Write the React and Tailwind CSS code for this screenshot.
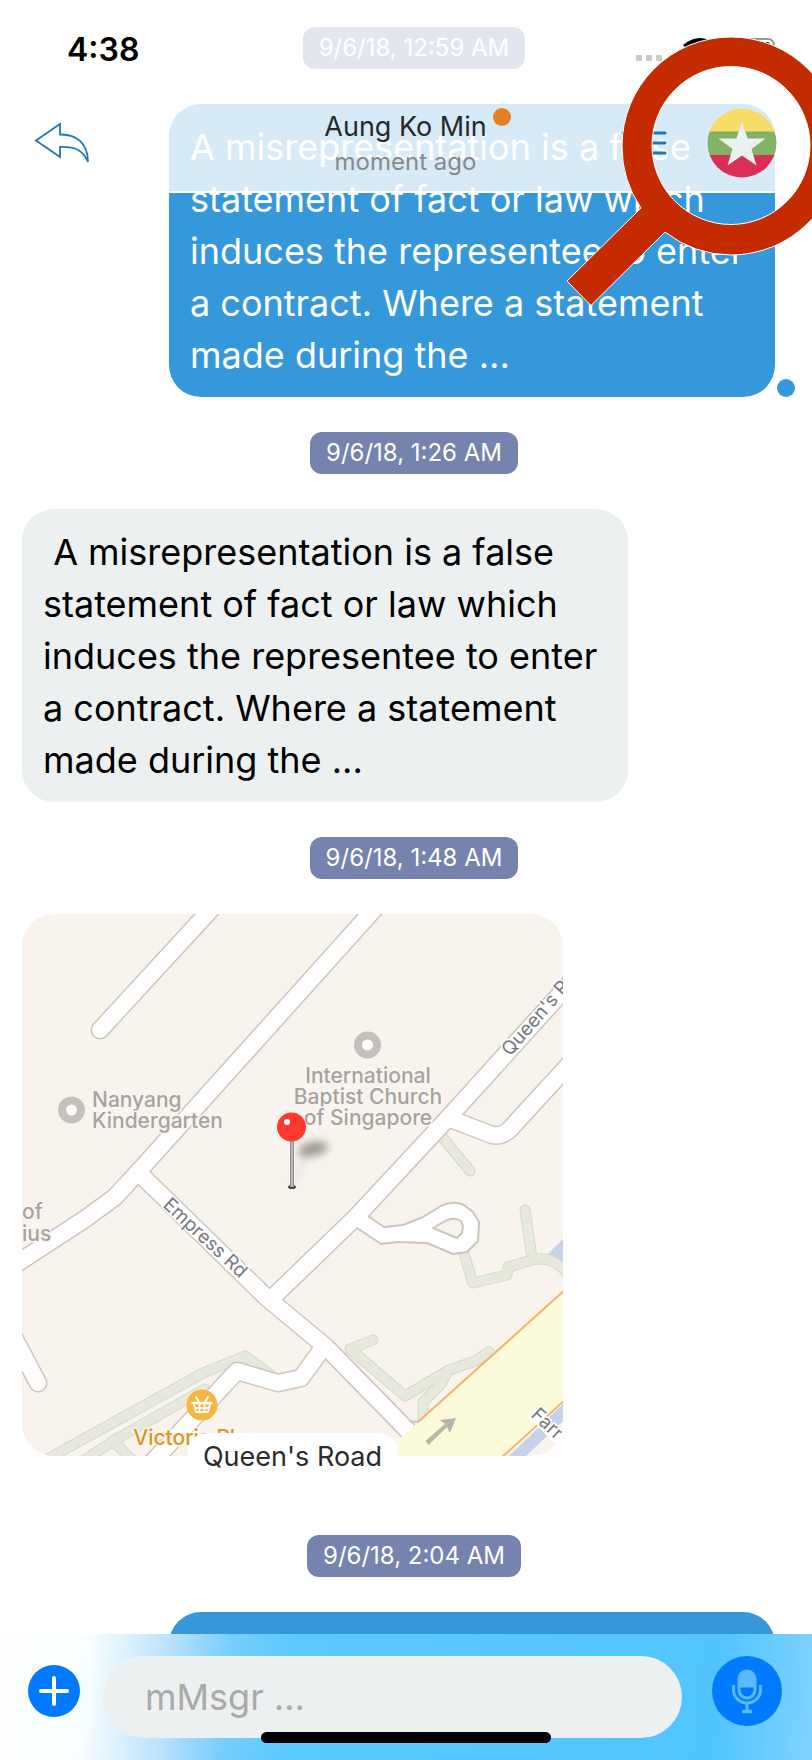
import React from "react";

const EXCERPT = [
  "A misrepresentation is a false",
  "statement of fact or law which",
  "induces the representee to enter",
  "a contract. Where a statement",
  "made during the ...",
];

function TimeStamp({ children }) {
  return (
    <div className="flex justify-center pl-4">
      <time className="flex h-[42px] items-center rounded-xl bg-[#7484ae] px-4 text-[24px] leading-[28px] text-white">
        {children}
      </time>
    </div>
  );
}

function Bubble({ lines, sent = false, indent = false, unread = false }) {
  return (
    <div className={sent ? "flex items-end justify-end gap-[2px] pr-[17px]" : "flex pl-[22px]"}>
      <p
        className={
          sent
            ? "min-h-[80px] w-[606px] rounded-[32px] bg-[#3598db] px-[21px] pb-4 pt-[17px] text-[36px] leading-[52px] text-white"
            : "w-[606px] rounded-[32px] bg-[#ecf0f1] px-[21px] pb-4 pt-[17px] text-[36px] leading-[52px] text-black"
        }
      >
        {lines.map((line, i) => (
          <span key={line} className="block whitespace-pre">
            {indent && i === 0 ? " " + line : line}
          </span>
        ))}
      </p>
      <span className={unread ? "size-[18px] rounded-full bg-[#3598db]" : sent ? "size-[18px]" : "hidden"} />
    </div>
  );
}

const GREEN = [
  "M40 1463L203 1373L245 1356L272 1376",
  "M80 1463L113 1441L205 1389",
  "M113 1441L134 1462",
  "M443 1138L470 1171",
  "M525 1210L532 1258",
  "M463 1250L473 1283L507 1275L508 1267L532 1260Q552 1255 566 1272",
  "M373 1340L350 1349L405 1396L447 1371L475 1361L489 1352L497 1360",
  "M447 1371Q443 1384 437 1388L423 1402L423 1424",
];

const ROADS = [
  "M100 1030L215 905",
  "M378 905L138 1172L115 1197L85 1219L10 1268",
  "M138 1172L267 1298L326 1347L420 1443",
  "M572 981L448 1118L356 1217L270 1300",
  "M448 1118L492 1135Q502 1137 510 1129L575 1058",
  "M322 1349L301 1378L278 1383L237 1371L145 1470",
  "M10 1330L38 1383",
];

const LOOP =
  "M360 1208L368 1216L384 1227L403 1225L423 1217L441 1206Q453 1200 464 1205L473 1212L479 1222L478 1241L467 1252L453 1254L427 1243L397 1242L381 1244L357 1228L350 1222ZM433 1228L447 1220Q456 1217 461 1221L463 1226L462 1233L457 1238Z";

function MapDrawing() {
  return (
    <svg
      viewBox="22 914 541 542"
      className="block h-[542px] w-[541px] rounded-[32px] bg-[#f8f4ed]"
      role="img"
      aria-label="Map"
      fontFamily="Inter, sans-serif"
    >
      <defs>
        <filter id="soft" x="-50%" y="-50%" width="200%" height="200%">
          <feGaussianBlur stdDeviation="4" />
        </filter>
      </defs>
      <path d="M548 1254L563 1239V1275Z" fill="#c6d1ea" />
      <g fill="none" strokeLinejoin="round" strokeLinecap="round">
        {GREEN.map((d) => (
          <path key={d} d={d} stroke="#d5d8c9" strokeWidth="11" />
        ))}
        {GREEN.map((d) => (
          <path key={d} d={d} stroke="#e7e9dd" strokeWidth="9" />
        ))}
        {ROADS.map((d) => (
          <path key={d} d={d} stroke="#cdc5be" strokeWidth="19" />
        ))}
        <path d={LOOP} fill="#fff" fillRule="evenodd" stroke="#cdc5be" strokeWidth="2" />
        {ROADS.map((d) => (
          <path key={d} d={d} stroke="#fff" strokeWidth="16" />
        ))}
      </g>
      <path d="M563 1292L418 1422L397 1441L385 1457H502L563 1402Z" fill="#fbfadb" />
      <path d="M508 1457L563 1404V1421L525 1457Z" fill="#c6d1ea" />
      <path d="M566 1289L418 1422M500 1459L566 1399" fill="none" stroke="#f5b169" strokeWidth="2" />
      <path d="M418 1422L409 1421" stroke="#cdc5be" strokeWidth="2" />
      <path d="M533 1412L562 1442" stroke="#fff" strokeWidth="13" />
      <path d="M425.500 1441L445 1424L440 1420L456 1418L450 1433L447 1427L428.500 1445Z" fill="#b6b6aa" />

      <g fill="#fff" stroke="#c4c1bb" strokeWidth="8">
        <circle cx="71.500" cy="1110" r="9.500" />
        <circle cx="367.500" cy="1045" r="9.500" />
      </g>
      <g
        fill="#a6a3a1"
        stroke="#f9f6f0"
        strokeWidth="3"
        strokeLinejoin="round"
        paintOrder="stroke"
        fontSize="21"
        fontWeight="500"
      >
        <text x="92" y="1107">Nanyang</text>
        <text x="92" y="1128">Kindergarten</text>
        <text x="368" y="1083" textAnchor="middle">International</text>
        <text x="368" y="1104" textAnchor="middle">Baptist Church</text>
        <text x="368" y="1125" textAnchor="middle">of Singapore</text>
        <text x="22" y="1219">of</text>
        <text x="22" y="1241">ius</text>
        <text x="202" y="1445" textAnchor="middle" fill="#d9961f">Victoria Plaza</text>
      </g>
      <g fill="#77797c" stroke="#fff" strokeWidth="3" paintOrder="stroke" fontSize="19">
        <text transform="translate(162 1206) rotate(43)">Empress Rd</text>
        <text transform="translate(510 1057) rotate(-49)">Queen's Rd</text>
        <text transform="translate(530 1416) rotate(43)">Farr</text>
      </g>

      <circle cx="202" cy="1405" r="15.500" fill="#f6b640" />
      <g fill="none" stroke="#fff" strokeWidth="1.800" strokeLinecap="round">
        <path d="M192.500 1403H211.500" strokeWidth="2.500" />
        <path d="M194 1404L196 1412H208L210 1404M195 1408H209M199.500 1404V1412M204.500 1404V1412M199 1402L196 1397M205 1402L208 1397" />
      </g>

      <ellipse cx="313" cy="1149" rx="15" ry="7" fill="#000" opacity=".38" filter="url(#soft)" transform="rotate(-12 313 1149)" />
      <path d="M293 1184L306 1155" stroke="#000" strokeWidth="5" opacity=".08" filter="url(#soft)" />
      <ellipse cx="292" cy="1187" rx="4" ry="2" fill="#444" />
      <rect x="290" y="1138" width="4" height="49" fill="#8e8e8e" />
      <rect x="291" y="1138" width="2" height="49" fill="#b9b9b9" />
      <circle cx="291.500" cy="1127" r="14.500" fill="#ff3b30" />
      <circle cx="287" cy="1122" r="3" fill="#fff" />
    </svg>
  );
}

function LocationMessage() {
  return (
    <figure className="relative ml-[22px] w-[541px] pb-[44px]">
      <MapDrawing />
      <figcaption className="absolute bottom-[19px] left-1/2 flex h-12 -translate-x-1/2 items-center rounded-[20px] bg-white px-4 text-[27px] leading-[34px] whitespace-nowrap text-[#2b2b2b]">
        Queen's Road
      </figcaption>
    </figure>
  );
}

function StatusIcons() {
  return (
    <svg viewBox="636 34 146 32" className="h-8 w-[146px]" aria-hidden="true">
      <g fill="#c9c9c9">
        <rect x="636" y="55" width="6" height="6" rx="1" />
        <rect x="646" y="55" width="6" height="6" rx="1" />
        <rect x="656" y="55" width="6" height="6" rx="1" />
      </g>
      <path d="M683 45Q700 31 717 45L700 62Z" fill="#000" />
      <rect x="727" y="39" width="47" height="22" rx="6" fill="none" stroke="#999" strokeWidth="2" />
      <rect x="731" y="42" width="39" height="16" rx="3" fill="#000" />
      <path d="M777 46Q780 49 777 54Z" fill="#999" />
    </svg>
  );
}

function Header() {
  return (
    <header className="absolute inset-x-0 top-0 border-b-2 border-white bg-white/80 pb-[2px]">
      <div className="flex h-[97px] items-center justify-between pl-[67px] pr-[30px] pt-[2px]">
        <span className="text-[32px] leading-10 font-semibold text-black">4:38</span>
        <StatusIcons />
      </div>
      <div className="grid h-[92px] grid-cols-[1fr_auto_1fr] items-center pl-[34px] pr-[35px]">
        <button type="button" aria-label="Back" className="w-14">
          <svg viewBox="34 121 56 44" className="h-11 w-14" fill="none" stroke="#2079b5" strokeWidth="1.800">
            <path d="M36 140.500L60 124V134.500C76 134 88 143 88 162C83 150 75 146.500 60 147V157Z" />
          </svg>
        </button>
        <div className="pt-[2px] text-center">
          <h1 className="relative text-[27px] leading-9 text-[#26292c]">
            Aung Ko Min
            <span className="absolute -right-6 -top-[1px] size-[18px] rounded-full bg-[#e67e22]" />
          </h1>
          <p className="text-[24px] leading-[34px] text-[#88898b]">moment ago</p>
        </div>
        <div className="flex items-center justify-end gap-10">
          <button type="button" aria-label="Menu">
            <svg viewBox="0 0 48 24" className="h-6 w-12" stroke="#1f78b4" strokeWidth="3" strokeLinecap="round">
              <path d="M14 2H46M14 12H46M14 22H46M4 2H5M6 12H7M6 22H7" />
            </svg>
          </button>
          <button type="button" aria-label="Profile" className="size-[70px]">
            <svg viewBox="0 0 70 70" className="size-full">
              <clipPath id="disc">
                <circle cx="35" cy="35" r="34.500" />
              </clipPath>
              <g clipPath="url(#disc)">
                <path d="M0 0H70V24H0Z" fill="#f7dc66" />
                <path d="M0 23.500H70V47H0Z" fill="#83b267" />
                <path d="M0 47H70V70H0Z" fill="#da2f55" />
              </g>
              <path
                d="M35 13.500L40.500 30.500H58.500L44.500 41L49.500 57.500L35 47.500L20.500 57.500L25.500 41L11.500 30.500H29.500Z"
                fill="#ecf0f1"
              />
            </svg>
          </button>
        </div>
      </div>
    </header>
  );
}

function Magnifier() {
  return (
    <svg
      viewBox="560 0 252 310"
      className="pointer-events-none absolute right-0 top-0 h-[310px] w-[252px]"
      aria-hidden="true"
    >
      <path
        d="M641 208A109 109 0 0 1 622 146A109 109 0 0 1 731 37A109 109 0 0 1 840 146A109 109 0 0 1 731 255A109 109 0 0 1 665 232L591 305.500L567 281ZM731 66.500A79 79 0 1 0 731 224.500A79 79 0 1 0 731 66.500Z"
        fill="#c42c00"
        fillRule="evenodd"
        stroke="#fff"
        strokeWidth="1"
      />
    </svg>
  );
}

function Composer() {
  return (
    <footer className="relative flex shrink-0 items-start bg-[linear-gradient(95deg,#fefefe_0%,#f8feff_11%,#d8f0ff_16%,#b8e0fd_21%,#79cefd_28%,#5ac9fe_36%,#52c5ff_88%,#80d2ff_100%)] pb-[22px] pl-7 pr-[30px] pt-[22px]">
      <div className="flex h-[70px] items-center">
        <button
          type="button"
          aria-label="Add attachment"
          className="flex size-[52px] items-center justify-center rounded-full bg-[#007aff]"
        >
          <svg viewBox="0 0 32 32" className="size-8" stroke="#fff" strokeWidth="4" strokeLinecap="round">
            <path d="M16 3V29M3 16H29" />
          </svg>
        </button>
      </div>
      <input
        type="text"
        aria-label="Message"
        placeholder="mMsgr ..."
        className="ml-[23px] mr-[30px] h-[82px] min-w-0 flex-1 rounded-full bg-[#ecf0f1] px-[42px] text-[36px] text-black outline-none placeholder:text-[#aaaaaa]"
      />
      <button type="button" aria-label="Record voice" className="size-[70px] rounded-full bg-[#007aff]">
        <svg viewBox="0 0 70 70" className="size-full" fill="none" stroke="#5cb8ff">
          <path d="M27 23A8 8 0 0 1 43 23V34A8 8 0 0 1 27 34Z" strokeWidth="3" />
          <path d="M27 30.500V23A8 8 0 0 1 43 23V30.500Z" fill="#5cb8ff" strokeWidth="2" />
          <path d="M21.500 29V34A13.500 13 0 0 0 48.500 34V29M35 47V56" strokeWidth="3" />
          <path d="M30 55.500H40" strokeWidth="3.500" />
        </svg>
      </button>
      <span className="absolute bottom-[17px] left-1/2 h-[11px] w-[290px] -translate-x-1/2 rounded-full bg-black" />
    </footer>
  );
}

export default function App() {
  return (
    <div className="relative flex h-screen flex-col overflow-hidden bg-white font-['Inter',sans-serif]">
      <main className="flex min-h-0 flex-1 flex-col gap-[35px] overflow-hidden pt-[27px] *:shrink-0">
        <TimeStamp>9/6/18, 12:59 AM</TimeStamp>
        <Bubble lines={EXCERPT} sent unread />
        <TimeStamp>9/6/18, 1:26 AM</TimeStamp>
        <Bubble lines={EXCERPT} indent />
        <TimeStamp>9/6/18, 1:48 AM</TimeStamp>
        <LocationMessage />
        <TimeStamp>9/6/18, 2:04 AM</TimeStamp>
        <Bubble lines={[]} sent />
      </main>
      <Composer />
      <Header />
      <Magnifier />
    </div>
  );
}
